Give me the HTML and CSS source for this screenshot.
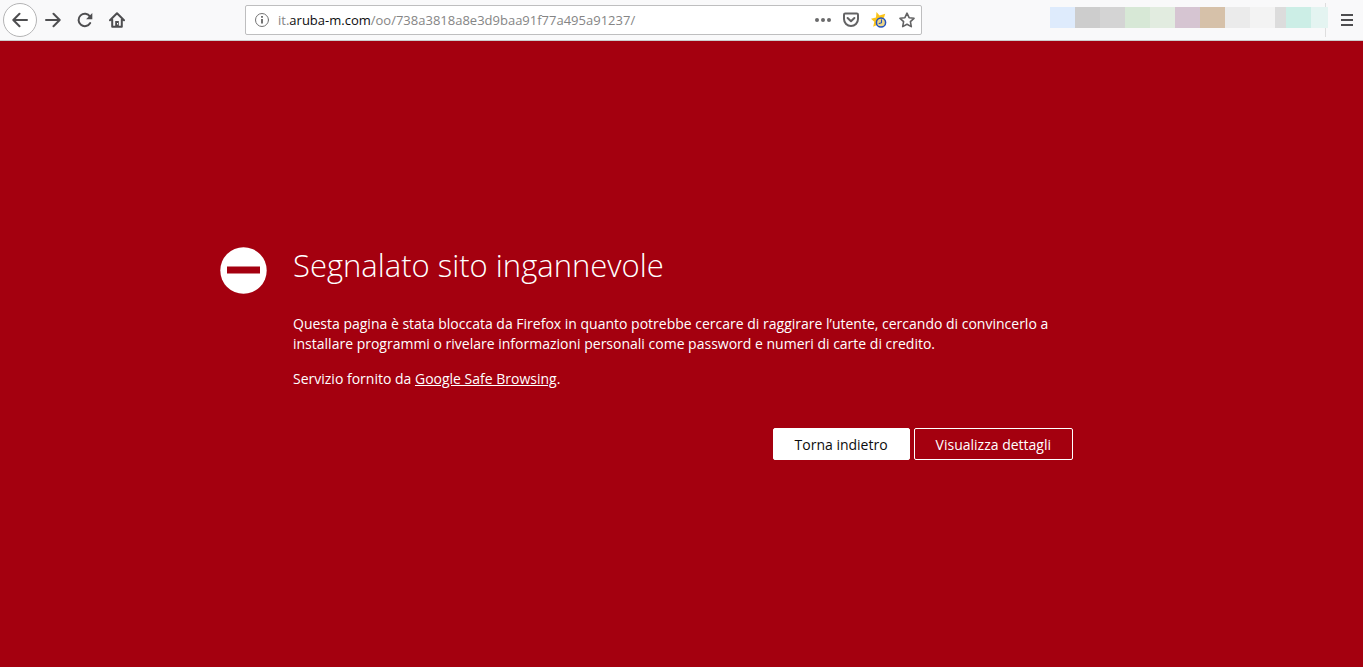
FILE: index.html
```html
<!DOCTYPE html>
<html lang="it">
<head>
<meta charset="utf-8">
<meta name="viewport" content="width=device-width, initial-scale=1">
<title>Segnalato sito ingannevole</title>
<link rel="stylesheet" href="styles.css">
</head>
<body>
<header class="toolbar">
  <nav class="nav" aria-label="Navigazione">
    <button class="tool back" type="button" aria-label="Indietro">
      <svg class="icon" viewBox="0 0 16 16"><path d="M15 8H1.5M7.500 1.800L1.300 8l6.200 6.200"/></svg>
    </button>
    <button class="tool" type="button" aria-label="Avanti">
      <svg class="icon" viewBox="0 0 16 16"><path d="M1 8h13.500M8.500 1.800L14.700 8l-6.200 6.200"/></svg>
    </button>
    <button class="tool" type="button" aria-label="Ricarica">
      <svg class="icon" viewBox="0 0 16 16"><path d="M13 4.600A6.200 6.200 0 1 0 13.200 11"/><path class="solid" d="M15.300 1v6.200H9.100z"/></svg>
    </button>
    <button class="tool" type="button" aria-label="Pagina iniziale">
      <svg class="icon" viewBox="0 0 16 16"><path d="M1 8.300L8 1.300l7 7M3.200 7.500v7.200h9.600V7.500"/><path class="solid" d="M6.200 9h3.600v6H6.200z"/><path class="hole" d="M8 11h1v1.500H8z"/></svg>
    </button>
  </nav>
  <div class="address">
    <button class="mini" type="button" aria-label="Informazioni sul sito">
      <svg class="icon thin" viewBox="0 0 16 16"><circle cx="8" cy="8" r="6.500"/><path class="info" d="M8 7v4.500M8 4v1.700"/></svg>
    </button>
    <div class="url"><span>it.</span><span class="domain">aruba-m.com</span><span>/oo/738a3818a8e3d9baa91f77a495a91237/</span></div>
    <div class="actions">
      <button class="mini" type="button" aria-label="Azioni pagina">
        <svg class="icon grey" viewBox="0 0 16 16"><circle cx="2" cy="8" r="2"/><circle cx="8" cy="8" r="2"/><circle cx="14" cy="8" r="2"/></svg>
      </button>
      <button class="mini" type="button" aria-label="Salva in Pocket">
        <svg class="icon pocket" viewBox="0 0 16 16"><path d="M2.200 1.500h11.600q1.200 0 1.200 1.200V7a7 7 0 0 1-14 0V2.700q0-1.200 1.200-1.200z"/><path d="M4.600 6L8 9.300 11.400 6"/></svg>
      </button>
      <button class="mini" type="button" aria-label="Segnalibri recenti">
        <svg class="icon" viewBox="0 0 16 16"><path class="gold" d="M5.500 0L8.500 3.500 14.300 1.700 12.500 7 15 12 9 11.500 2.200 14.700 3.300 9.700 0 6.800 5 5.400z"/><circle class="clock" cx="10" cy="10.500" r="4.600"/><path class="hands" d="M10.500 7.700v3L8.200 11.500"/></svg>
      </button>
      <button class="mini" type="button" aria-label="Aggiungi ai segnalibri">
        <svg class="icon star" viewBox="0 0 16 16"><path d="M8 1.200l2.100 4.500 4.900.6-3.600 3.400.9 4.900L8 12.200l-4.300 2.400.9-4.900L1 6.300l4.900-.6z"/></svg>
      </button>
    </div>
  </div>
  <div class="end">
    <div class="mosaic">
      <i class="tile blue"></i><i class="tile silver"></i><i class="tile ash"></i><i class="tile mint"></i><i class="tile sage"></i><i class="tile mauve"></i><i class="tile tan"></i><i class="tile mist"></i><i class="tile snow"></i><i class="tile stone"></i><i class="tile aqua"></i><i class="tile foam"></i>
    </div>
    <button class="menu" type="button" aria-label="Apri menu">
      <svg class="bars" viewBox="0 0 12 12"><path d="M0 1h12M0 6h12M0 11h12"/></svg>
    </button>
  </div>
</header>
<main class="page">
  <svg class="sign" viewBox="0 0 47 47" aria-hidden="true"><circle cx="23.500" cy="23.500" r="23.200"/><path d="M7 19.500h33v7H7z"/></svg>
  <section class="warning">
    <h1 class="title">Segnalato sito ingannevole</h1>
    <p class="text">Questa pagina è stata bloccata da Firefox in quanto potrebbe cercare di raggirare l’utente, cercando di convincerlo a installare programmi o rivelare informazioni personali come password e numeri di carte di credito.</p>
    <p class="text">Servizio fornito da <a class="link" href="#">Google Safe Browsing</a>.</p>
    <div class="buttons">
      <button class="button primary" type="button">Torna indietro</button>
      <button class="button" type="button">Visualizza dettagli</button>
    </div>
  </section>
</main>
</body>
</html>
```
FILE: styles.css
```css
* { box-sizing: border-box; }

body {
  margin: 0;
  min-height: 100vh;
  display: flex;
  flex-direction: column;
  background: #a4000f;
  font-family: "Open Sans", "Noto Sans", sans-serif;
}

button {
  margin: 0;
  padding: 0;
  border: 0;
  background: none;
  font: inherit;
  color: inherit;
}

.toolbar {
  display: grid;
  grid-template-columns: 242fr 677fr 441fr;
  align-items: center;
  height: 41px;
  padding-left: 3px;
  background: #f9f9fa;
  border-bottom: 1px solid #ccc;
}

.nav { display: flex; align-items: center; }

.tool {
  display: grid;
  place-items: center;
  width: 32px;
  height: 34px;
}

.back {
  width: 34px;
  border: 1px solid #b4b4b5;
  border-radius: 50%;
  background: #fff;
}

.icon {
  display: block;
  width: 16px;
  height: 16px;
  fill: none;
  stroke: #4e4e50;
  stroke-width: 2;
  stroke-linecap: round;
  stroke-linejoin: round;
}

.solid { fill: #4e4e50; stroke: none; }
.hole { fill: #f9f9fa; stroke: none; }
.thin { stroke: #737373; stroke-width: 1; }
.info { stroke-width: 2; stroke-linecap: butt; }
.grey { fill: #6a6a6b; stroke: none; }
.pocket, .star { stroke: #636364; }
.star { stroke-width: 1.6; }
.gold { fill: #fcc419; stroke: none; }
.clock { fill: #ecd68a; stroke: #2352bd; stroke-width: 1.5; }
.hands { stroke: #2352bd; stroke-width: 1.1; }

.address {
  display: flex;
  align-items: center;
  height: 30px;
  padding: 0 6px 0 8px;
  background: #fff;
  border: 1px solid #bebebf;
  border-radius: 2px;
}

.mini { flex: none; }

.url {
  flex: 1;
  min-width: 0;
  margin-left: 8px;
  overflow: hidden;
  white-space: nowrap;
  font-size: 13px;
  line-height: 20px;
  color: #858585;
}

.domain { color: #0c0c0d; }

.actions { display: flex; gap: 12px; }

.end { display: flex; justify-content: flex-end; align-items: center; }

.mosaic {
  z-index: 1;
  display: flex;
  height: 21px;
  margin-bottom: 5px;
}

.tile { width: 25px; }
.blue { background: #deebfc; }
.silver { background: #cdcdcd; }
.ash { background: #d4d4d4; }
.mint { background: #d7e8d6; }
.sage { background: #e2ece0; }
.mauve { background: #d6c5d2; }
.tan { background: #d6c1a9; }
.mist { background: #ebebeb; }
.snow { background: #f3f3f3; }
.stone { width: 11px; background: #dcdcdc; }
.aqua { background: #cceee6; }
.foam { width: 17px; background: #e4f4f1; }

.menu {
  display: grid;
  place-items: center;
  width: 38px;
  height: 34px;
  margin-left: -3px;
  border-left: 1px solid #dedede;
}

.bars {
  width: 12px;
  height: 12px;
  margin-left: 5px;
  stroke: #4e4e50;
  stroke-width: 2;
}

.page {
  flex: 1;
  display: grid;
  grid-template-columns: 1fr minmax(0, 780px) 1fr;
  align-content: center;
  padding: 0 0 1px 3px;
  color: #fff;
}

.sign {
  justify-self: end;
  width: 47px;
  height: 47px;
  margin-right: 26px;
  fill: #fff;
}

.sign path { fill: #a4000f; }

.title {
  margin: 0 0 30px;
  font-size: 31px;
  line-height: 37px;
  font-weight: 300;
}

.text {
  margin: 0 0 15px;
  font-size: 14px;
  line-height: 20px;
}

.link { color: inherit; }

.buttons {
  display: flex;
  justify-content: flex-end;
  gap: 4px;
  margin-top: 39px;
}

.button {
  height: 32px;
  padding: 0 21px;
  border: 1px solid #fff;
  border-radius: 2px;
  font-size: 14px;
}

.primary { background: #fff; color: #0c0c0d; }
```
